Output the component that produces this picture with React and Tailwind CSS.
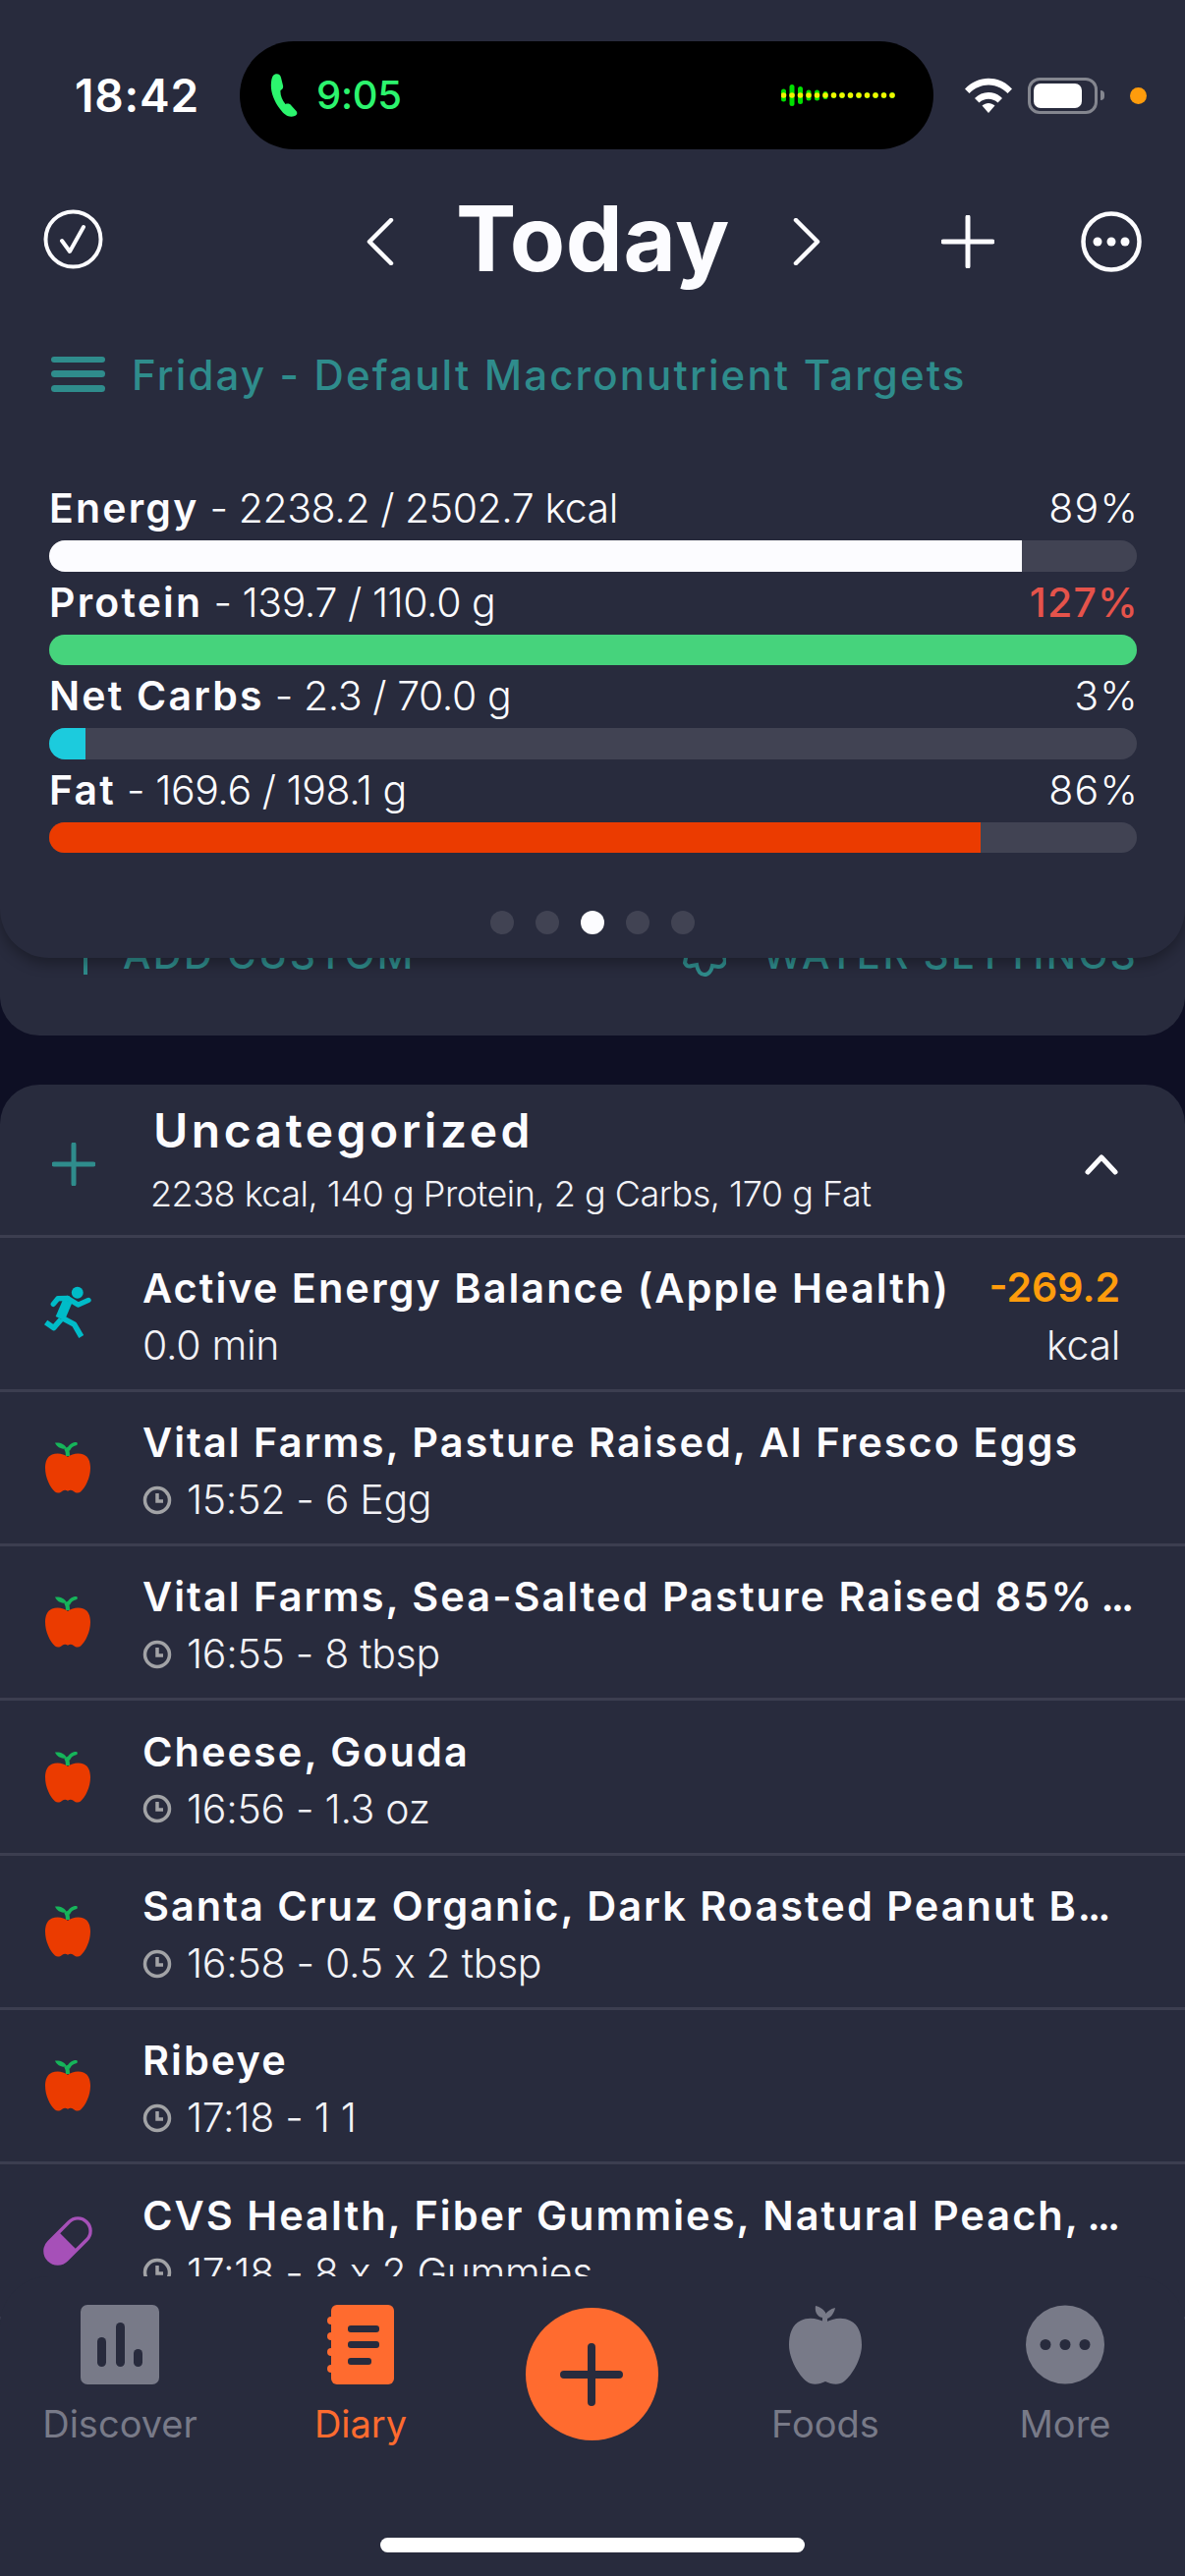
import React from "react";

function Apple({ color = "#eb3b00", leaf = "#16b45a", w = 46, h = 52 }) {
  return (
    <svg width={w} height={h} viewBox="0 0 46 52" fill="none">
      <path d="M23 15C19 11.500 12 10.500 7 12.500C2 14.500 0 20 0 26C0 36 5 46 10 50.500C12.500 52.500 15 51.500 17 50C19.500 48.500 21 48.500 23 49.800C25 48.500 26.500 48.500 29 50C31 51.500 33.500 52.500 36 50.500C41 46 46 36 46 26C46 20 44 14.500 39 12.500C34 10.500 27 11.500 23 15Z" fill={color} />
      <path d="M23 14C23 10 22.500 8 21 6" stroke={leaf} strokeWidth="4" />
      <path d="M10 0.500C15 0 20 1.500 22 6.500C17 7.500 12 5.500 10 0.500Z" fill={leaf} />
      <path d="M24 7C25 4 27 2.500 31 1.500" stroke={leaf} strokeWidth="3.500" strokeLinecap="round" />
    </svg>
  );
}

function FoodsApple() {
  return (
    <svg width="74" height="81" viewBox="0 0 74 81" fill="none">
      <path d="M37 18C30 14 20 12 12 16C3 20 0 30 0 41C0 55 10 72 18 78C23 82 31 81 37 78C43 81 51 82 56 78C64 72 74 55 74 41C74 30 71 20 62 16C54 12 44 14 37 18Z" fill="#787a88" />
      <path d="M34 20V13C28 12 26 6 27 1C32 2 37 6 37.500 9C39 7 42 4 47 3C46 9 42 13 39 14V20Z" fill="#787a88" />
    </svg>
  );
}

function Runner() {
  return (
    <svg width="53" height="57" viewBox="130 90 160 171" fill="none" stroke="#00bcc8" strokeLinecap="round" strokeLinejoin="round">
      <circle cx="238" cy="113" r="18" fill="#00bcc8" stroke="none" />
      <path d="M208 138L185 192" strokeWidth="30" strokeLinecap="butt" />
      <path d="M208 130L240 150L272 136" strokeWidth="16" />
      <path d="M208 130L178 131L164 148" strokeWidth="16" />
      <path d="M188 195L165 221L141 204" strokeWidth="17" strokeLinecap="butt" />
      <path d="M190 190L228 210L250 248" strokeWidth="17" strokeLinecap="butt" />
    </svg>
  );
}

function Pill() {
  return (
    <svg width="52" height="52" viewBox="0 0 52 52" fill="none">
      <g transform="rotate(-45 26 26)">
        <rect x="-3" y="11.500" width="58" height="29" rx="14.500" fill="#a650b8" />
        <path d="M26 15H41C47 15 51.500 20 51.500 26C51.500 32 47 37 41 37H26Z" fill="#282b3d" />
      </g>
    </svg>
  );
}

function Clock() {
  return (
    <svg width="30" height="30" viewBox="0 0 30 30" fill="none" stroke="#a2a3a6" className="shrink-0">
      <circle cx="15" cy="15" r="12.500" strokeWidth="3.500" />
      <path d="M15 8V16H21" strokeWidth="3.500" />
    </svg>
  );
}

function Dots() {
  return <span className="tracking-[-3px]"> ...</span>;
}

function Bar({ label, value, pct, width, color, pctClass = "text-[#fcfcff] font-light" }) {
  return (
    <div>
      <div className="flex h-[64px] items-center justify-between text-[#fcfcff]">
        <div className="text-[41px] font-light tracking-[-0.450px]">
          <span className="font-semibold tracking-[2.200px]">{label}</span> - {value}
        </div>
        <div className={`-mr-[2px] text-[41px] tracking-[1.200px] ${pctClass}`}>{pct}</div>
      </div>
      <div className="h-[31.500px] overflow-hidden rounded-[16px] bg-[#414353]">
        <div className="h-full" style={{ width, background: color }} />
      </div>
    </div>
  );
}

function Row({ icon, title, sub, time, right, rightSub }) {
  return (
    <div className="flex h-[157.300px] box-border items-center border-b-[3px] border-[#3c3e50] pl-[43px]">
      <div className="flex w-[102px] shrink-0 items-center">{icon}</div>
      <div className="flex h-full min-w-0 flex-1 flex-col pt-[21.500px]">
        <div className="flex h-[59.500px] items-center justify-between pr-[66px]">
          <div className="whitespace-nowrap text-[41.500px] font-semibold tracking-[2px] text-[#fcfcff]">{title}</div>
          {right && <div className="text-[41px] font-semibold text-[#ff9c0c]">{right}</div>}
        </div>
        <div className="flex h-[58px] items-center justify-between pr-[66px] text-[41px] font-light tracking-[-0.300px] text-[#f2f2f6]">
          <div className="flex items-center gap-[15px]">
            {time && <Clock />}
            <span>{sub}</span>
          </div>
          {rightSub && <div>{rightSub}</div>}
        </div>
      </div>
    </div>
  );
}

function Tab({ w, label, active, children }) {
  return (
    <div className="flex shrink-0 flex-col items-center" style={{ width: w }}>
      <div className="flex h-[81px] items-center justify-center">{children}</div>
      <div className={`mt-[18px] text-[38px] font-normal leading-[44px] ${active ? "text-[#ff6b2f]" : "text-[#787a88]"}`}>{label}</div>
    </div>
  );
}

const wave = [13, 22, 18, 11, 11, 8, 6, 6, 6, 6, 6, 6, 6, 6];

export default function App() {
  return (
    <div className="relative flex h-[2622px] w-[1206px] flex-col overflow-hidden bg-[#0e0f24] font-['Inter',sans-serif]">
      <div className="relative z-10 h-[975px] shrink-0 rounded-b-[50px] bg-[#282b3d] shadow-[0_6px_14px_rgba(0,0,0,0.3)]">
        <div className="flex h-[110px] items-center pl-[76px] pt-[42px] box-content">
          <div className="w-[168px] text-[46px] font-semibold tracking-[0.800px] text-white">18:42</div>
          <div className="flex h-[110px] w-[706px] items-center rounded-[55px] bg-black pl-[31px]">
            <svg width="36" height="44" viewBox="0 0 36 44" fill="#2cf56e">
              <path d="M5 0.500C8 -0.500 10.500 1 11 4L13 12C13.500 14.500 12.500 16 10.500 17C10 21 12 27 15.500 31C18 30 20 30.500 21.500 32.500L26.500 38C28 40 27.500 42 25 43C20 45 15 43 10 36C3 27 0 17 1 9C1.500 4 2.500 1.500 5 0.500Z" />
            </svg>
            <span className="ml-[11px] text-[40px] font-medium tracking-[-0.300px] text-[#2cf56e]">9:05</span>
            <svg width="116" height="24" viewBox="0 0 116 24" className="ml-[386px]">
              {wave.map((h, i) => (
                <g key={i}>
                  <rect x={i * 8.5} y={12 - h / 2} width="5" height={h} rx="2.500" fill="#00e000" />
                  <circle cx={i * 8.5 + 2.5} cy="12" r="2.800" fill="#f4f400" />
                </g>
              ))}
            </svg>
          </div>
          <svg width="48" height="36" viewBox="0 0 48 36" className="ml-[32px]" fill="#fff">
            <path d="M0 11.500C13.500 -3 34.500 -3 48 11.500L43.500 16C32 4.500 16 4.500 4.500 16Z" />
            <path d="M10 21C17.500 13 30.500 13 38 21L33.500 25.500C28 20.500 20 20.500 14.500 25.500Z" />
            <path d="M17.500 28.500C21.500 25 26.500 25 30.500 28.500L24 36Z" />
          </svg>
          <div className="ml-[16px] flex h-[37px] w-[71px] items-center rounded-[12px] border-[3px] border-[#84868f] p-[3px]">
            <div className="h-full w-[49px] rounded-[7px] bg-white" />
          </div>
          <div className="ml-[3px] h-[10px] w-[4px] rounded-r-[4px] bg-[#84868f]" />
          <div className="ml-[26px] h-[17px] w-[17px] rounded-full bg-[#ff9c0c]" />
        </div>

        <div className="mt-[54px] flex h-[80px] items-center pl-[44px]">
          <svg width="61" height="61" viewBox="0 0 61 61" fill="none" stroke="#fcfcff" strokeWidth="4" className="-mt-[6px]">
            <circle cx="30.500" cy="30.500" r="28" />
            <path d="M19 32L27 43L41 18" strokeWidth="4" strokeLinecap="round" strokeLinejoin="round" />
          </svg>
          <svg width="28" height="48" viewBox="0 0 28 48" fill="none" stroke="#fcfcff" strokeWidth="4.500" strokeLinecap="round" strokeLinejoin="round" className="ml-[268px]">
            <path d="M25 2L3 24L25 46" />
          </svg>
          <div className="-mt-[7px] ml-[63px] w-[278px] whitespace-nowrap text-[92px] font-bold leading-[80px] tracking-[0.600px] text-[#fcfcff]">Today</div>
          <svg width="28" height="48" viewBox="0 0 28 48" fill="none" stroke="#fcfcff" strokeWidth="4.500" strokeLinecap="round" strokeLinejoin="round" className="ml-[65px]">
            <path d="M3 2L25 24L3 46" />
          </svg>
          <svg width="54" height="54" viewBox="0 0 54 54" fill="none" stroke="#fcfcff" strokeWidth="5" strokeLinecap="round" className="ml-[123px]">
            <path d="M27 2V52M2 27H52" />
          </svg>
          <svg width="62" height="62" viewBox="0 0 62 62" fill="none" className="ml-[88px]">
            <circle cx="31" cy="31" r="28.500" stroke="#fcfcff" strokeWidth="4.500" />
            <circle cx="17" cy="31" r="4.500" fill="#fcfcff" />
            <circle cx="31" cy="31" r="4.500" fill="#fcfcff" />
            <circle cx="45" cy="31" r="4.500" fill="#fcfcff" />
          </svg>
        </div>

        <div className="mt-[70px] flex h-[50px] items-center pl-[52px]">
          <div className="flex w-[55px] flex-col gap-[8px]">
            <div className="h-[6px] rounded-full bg-[#2f8c8c]" />
            <div className="h-[7px] rounded-full bg-[#2f8c8c]" />
            <div className="h-[7px] rounded-full bg-[#2f8c8c]" />
          </div>
          <div className="ml-[27px] whitespace-nowrap text-[42px] font-medium tracking-[2.150px] text-[#2f8c8c]">Friday - Default Macronutrient Targets</div>
        </div>

        <div className="mt-[80px] pl-[50px] pr-[49px]">
          <Bar label="Energy" value="2238.2 / 2502.7 kcal" pct="89%" width="89.400%" color="#fcfcff" />
          <Bar label="Protein" value="139.7 / 110.0 g" pct="127%" width="100%" color="#46d37c" pctClass="text-[#e5534b] font-medium" />
          <Bar label="Net Carbs" value="2.3 / 70.0 g" pct="3%" width="3.300%" color="#1ccbdd" />
          <Bar label="Fat" value="169.6 / 198.1 g" pct="86%" width="85.600%" color="#eb3b00" />
        </div>

        <div className="mt-[59px] flex justify-center gap-[22px]">
          <div className="h-[24px] w-[24px] rounded-full bg-[#414353]" />
          <div className="h-[24px] w-[24px] rounded-full bg-[#414353]" />
          <div className="h-[24px] w-[24px] rounded-full bg-[#fcfcff]" />
          <div className="h-[24px] w-[24px] rounded-full bg-[#414353]" />
          <div className="h-[24px] w-[24px] rounded-full bg-[#414353]" />
        </div>
      </div>

      <div className="-mt-[100px] h-[179px] shrink-0 rounded-b-[40px] bg-[#282b3d] pt-[72px]">
        <div className="flex h-[50px] items-center text-[40px] font-medium tracking-[2.400px] text-[#2f8c8c]">
          <svg width="24" height="40" viewBox="0 0 24 40" fill="none" stroke="#2f8c8c" strokeWidth="4" className="ml-[75px]">
            <path d="M12 0V40M0 14H24" />
          </svg>
          <span className="ml-[26px] w-[300px] whitespace-nowrap">ADD CUSTOM</span>
          <svg width="44" height="44" viewBox="0 0 44 44" fill="none" stroke="#2f8c8c" strokeWidth="4" className="ml-[270px]">
            <path d="M4 20L2 30C4 34 6 34 9 33L14 32C15 38 18 42 22 42C26 42 29 38 30 33L36 34C39 34 42 32 43 28L41 20" />
          </svg>
          <span className="ml-[37px] whitespace-nowrap">WATER SETTINGS</span>
        </div>
      </div>

      <div className="mt-[50px] flex-1 overflow-hidden rounded-t-[40px] bg-[#282b3d]">
        <div className="flex h-[155.600px] box-border items-center border-b-[3px] border-[#3c3e50]">
          <svg width="44" height="44" viewBox="0 0 44 44" fill="none" stroke="#2f8c8c" strokeWidth="5" strokeLinecap="round" className="ml-[53px] mt-[10px] shrink-0">
            <path d="M22 2V42M2 22H42" />
          </svg>
          <div className="ml-[59px] flex-1">
            <div className="-mt-[1px] h-[62px] text-[48px] font-semibold leading-[62px] tracking-[3.500px] text-[#fcfcff]">Uncategorized</div>
            <div className="-ml-[3px] mt-[8px] h-[50px] text-[36px] font-light leading-[50px] tracking-[-0.500px] text-[#f2f2f6]">2238 kcal, 140 g Protein, 2 g Carbs, 170 g Fat</div>
          </div>
          <svg width="34" height="22" viewBox="0 0 34 22" fill="none" stroke="#fcfcff" strokeWidth="5" strokeLinecap="round" strokeLinejoin="round" className="mr-[68px] mt-[10px]">
            <path d="M3 19L17 4L31 19" />
          </svg>
        </div>
        <Row icon={<Runner />} title="Active Energy Balance (Apple Health)" sub="0.0 min" right="-269.2" rightSub="kcal" />
        <Row icon={<div className="ml-[3px]"><Apple /></div>} title="Vital Farms, Pasture Raised, Al Fresco Eggs" sub="15:52 - 6 Egg" time />
        <Row icon={<div className="ml-[3px]"><Apple /></div>} title={<>Vital Farms, Sea-Salted Pasture Raised 85%<Dots /></>} sub="16:55 - 8 tbsp" time />
        <Row icon={<div className="ml-[3px]"><Apple /></div>} title="Cheese, Gouda" sub="16:56 - 1.3 oz" time />
        <Row icon={<div className="ml-[3px]"><Apple /></div>} title={<>Santa Cruz Organic, Dark Roasted Peanut B<span className="tracking-[-3px]">...</span></>} sub="16:58 - 0.5 x 2 tbsp" time />
        <Row icon={<div className="ml-[3px]"><Apple /></div>} title="Ribeye" sub="17:18 - 1 1" time />
        <Row icon={<Pill />} title={<>CVS Health, Fiber Gummies, Natural Peach,<Dots /></>} sub="17:18 - 8 x 2 Gummies" time />
      </div>

      <div className="absolute bottom-0 left-0 z-20 h-[305px] w-[1206px] rounded-t-[50px] bg-[#282b3d]">
        <div className="flex pt-[29px]">
          <Tab w={244} label="Discover">
            <svg width="80" height="81" viewBox="0 0 80 81">
              <rect width="80" height="81" rx="7" fill="#787a88" />
              <rect x="17" y="33" width="9" height="30" rx="4.500" fill="#282b3d" />
              <rect x="36" y="18" width="9" height="45" rx="4.500" fill="#282b3d" />
              <rect x="54" y="45" width="9" height="18" rx="4.500" fill="#282b3d" />
            </svg>
          </Tab>
          <Tab w={246} label="Diary" active>
            <svg width="68" height="81" viewBox="0 0 68 81">
              <rect x="4" width="64" height="81" rx="6" fill="#ff6b2f" />
              <circle cx="4" cy="16" r="4" fill="#ff6b2f" />
              <circle cx="4" cy="32" r="4" fill="#ff6b2f" />
              <circle cx="4" cy="48" r="4" fill="#ff6b2f" />
              <circle cx="4" cy="65" r="4" fill="#ff6b2f" />
              <rect x="21" y="21" width="32" height="7" rx="3" fill="#282b3d" />
              <rect x="21" y="37" width="32" height="7" rx="3" fill="#282b3d" />
              <rect x="21" y="54" width="24" height="7" rx="3" fill="#282b3d" />
            </svg>
          </Tab>
          <div className="flex w-[224px] shrink-0 justify-center">
            <div className="mt-[3px] flex h-[135px] w-[135px] items-center justify-center rounded-full bg-[#ff6b2f]">
              <svg width="64" height="64" viewBox="0 0 64 64" fill="none" stroke="#282b3d" strokeWidth="8" strokeLinecap="round">
                <path d="M32 4V60M4 32H60" />
              </svg>
            </div>
          </div>
          <Tab w={252} label="Foods">
            <FoodsApple />
          </Tab>
          <Tab w={236} label="More">
            <svg width="80" height="81" viewBox="0 0 80 81">
              <circle cx="40" cy="40.500" r="40" fill="#787a88" />
              <circle cx="20" cy="40.500" r="5.500" fill="#282b3d" />
              <circle cx="40" cy="40.500" r="5.500" fill="#282b3d" />
              <circle cx="60" cy="40.500" r="5.500" fill="#282b3d" />
            </svg>
          </Tab>
        </div>
      </div>
      <div className="absolute bottom-[24px] left-[387px] z-30 h-[15px] w-[432px] rounded-full bg-white" />
    </div>
  );
}
